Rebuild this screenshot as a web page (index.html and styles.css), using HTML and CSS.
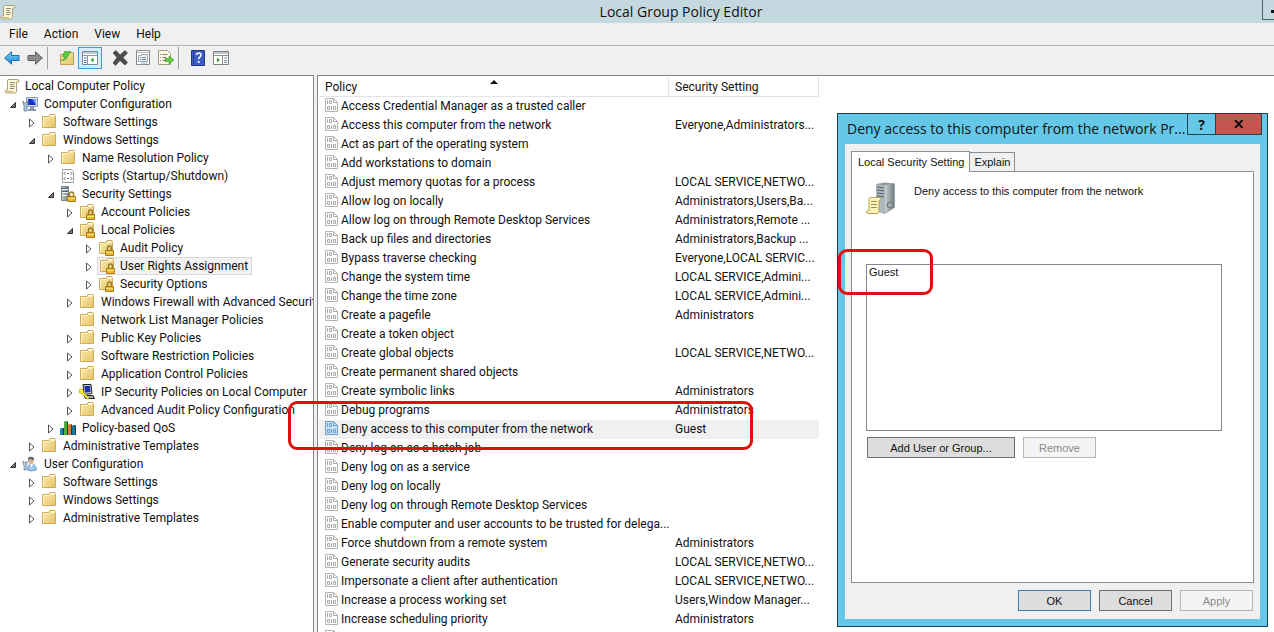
FILE: index.html
```html
<!DOCTYPE html>
<html lang="en">
  <head>
    <meta charset="UTF-8" />
    <meta name="viewport" content="width=device-width, initial-scale=1.0" />
    <title>Local Group Policy Editor</title>
    <link rel="stylesheet" href="styles.css">
  </head>
  <body>
    <svg class="sprites" aria-hidden="true">
      <defs>
        <linearGradient id="gold" x1="0" y1="0" x2="1" y2="1">
          <stop offset="0" stop-color="#fbeab0" />
          <stop offset="1" stop-color="#e6c467" />
        </linearGradient>
        <linearGradient id="steel" x1="0" y1="0" x2="1" y2="0">
          <stop offset="0" stop-color="#c9d0d2" />
          <stop offset="1" stop-color="#6f7a7e" />
        </linearGradient>
        <linearGradient id="sky" x1="0" y1="0" x2="0" y2="1">
          <stop offset="0" stop-color="#7fd0fa" />
          <stop offset="1" stop-color="#1587d8" />
        </linearGradient>
      </defs>
      <symbol id="closed" viewBox="0 0 8 10">
        <path d="M1.5 1v8L6 5z" fill="#fff" stroke="#555" />
      </symbol>
      <symbol id="open" viewBox="0 0 8 10">
        <path d="M6.5 2.5v5h-5z" fill="#777" stroke="#333" />
      </symbol>
      <symbol id="scroll" viewBox="0 0 16 16">
        <path d="M4.5 1.5h9q1.500 0 1.500 1.500t-1.500 1.500h-1v9q-.5 1.500-2 1.500h-8q-1.500 0-1.500-1.500t1.500-1.500h1v-9q0-1.500 1-1.500z" fill="#fdf8d8" stroke="#a9a27c" />
        <path d="M6 4.500h5M6 6.500h4M6 8.500h5M6 10.500h4" stroke="#8d8d80" />
        <path d="M2 13.500h7M12.500 3h2" stroke="#c5b878" />
      </symbol>
      <symbol id="folder" viewBox="0 0 16 16">
        <path d="M1.500 2.500h6.500l1-2h5v2h.5v11h-13z" fill="url(#gold)" stroke="#cfab58" />
        <path d="M9.500 1.500h4" stroke="#fff" />
        <path d="M2.500 13V3.500h6l1-1h4" fill="none" stroke="#fff3c8" />
      </symbol>
      <symbol id="lock" viewBox="0 0 16 16">
        <path d="M9.500 10V8q0-2 2-2t2 2v2" fill="none" stroke="#9c7a28" stroke-width="1.500" />
        <path d="M7.500 10.500h8v5h-8z" fill="#e9b634" stroke="#a87b18" />
        <path d="M8 12.500h7" stroke="#fbe07c" />
      </symbol>
      <symbol id="folder-lock" viewBox="0 0 16 16">
        <use href="#folder" width="16" height="16" />
        <use href="#lock" width="16" height="16" />
      </symbol>
      <symbol id="server-lock" viewBox="0 0 16 16">
        <path d="M1.500.5h7v14h-7z" fill="url(#steel)" stroke="#78868c" />
        <path d="M2 3.500h6M2 6.500h6M2 9.500h5" stroke="#eef3f5" />
        <path d="M2 2.500h6M2 5.500h6" stroke="#52646e" />
        <use href="#lock" width="16" height="16" />
      </symbol>
      <symbol id="computer" viewBox="0 0 16 16">
        <path d="M4.500 1.500h11v9h-11z" fill="#dce4f2" stroke="#8797b8" />
        <path d="M6 3h8v6H6z" fill="#1630c8" />
        <path d="M10 3h4v6z" fill="#6f9cf4" />
        <path d="M8 11h4v2h2v2H6v-2h2z" fill="#8c98ad" />
        <path d="M1 5v3l1 1v6h3V9l1-1V5L4.500 7h-2z" fill="#a9c3d6" stroke="#56758b" stroke-width=".7" />
      </symbol>
      <symbol id="user" viewBox="0 0 16 16">
        <path d="M5 14q0-6 4.500-6t5 6q-5 2-9.500 0z" fill="#9ec4ec" stroke="#5a86b8" stroke-width=".7" />
        <path d="M8 8l1.500 4L11 8z" fill="#fff" />
        <ellipse cx="9" cy="4.500" rx="2.800" ry="3.500" fill="#d9b48d" />
        <path d="M6 4.500Q5.500.5 9 .8t3 3.500Q9 3.500 8 2.800 7.500 4 6 4.500z" fill="#5d6670" />
        <path d="M1 5v3l1 1v5h2V9l1-1V5L4 6.500H2z" fill="#bacddc" stroke="#64808f" stroke-width=".7" />
      </symbol>
      <symbol id="script" viewBox="0 0 16 16">
        <path d="M2.500 1.500h9l2 2v11h-11z" fill="#fff" stroke="#a0a0a0" />
        <path d="M5.500 4L4 5.500 5.500 7M10.500 4L12 5.500 10.500 7M5.500 9L4 10.500 5.500 12M10.500 9l1.500 1.500L10.500 12M7 5.500h2M7 10.500h2" fill="none" stroke="#666" />
      </symbol>
      <symbol id="ipsec" viewBox="0 0 16 16">
        <path d="M4 .5h8l1 9-8 1z" fill="#c8ccd8" stroke="#222" />
        <path d="M5.500 2h5.500l.5 6-5.500.5z" fill="#1b2fa8" />
        <path d="M5 11.500h9l1.500 3h-9z" fill="#a8acb8" stroke="#222" />
        <path d="M0 7q0-2.500 2.500-2t1.800 3l6 6-1.500 1.200L7 14 6 12.500 2.500 9.500Q0 9.500 0 7z" fill="#fff02c" stroke="#9b8d00" stroke-width=".6" />
      </symbol>
      <symbol id="bars" viewBox="0 0 16 16">
        <path d="M0 9l1-1h3v7H0z" fill="#1c7fae" />
        <path d="M4 2l1-1h3v14H4z" fill="#4cae3c" />
        <path d="M8 5l1-1h3v11H8z" fill="#e8724f" />
        <path d="M12 6l1-1h3v10h-4z" fill="#157895" />
        <path d="M3.500 8v7M7.500 2v13M11.500 5v10M15.500 6v9" stroke="#173d49" />
      </symbol>
      <symbol id="policy" viewBox="0 0 13 14">
        <path d="M.5.5h8l4 4v9H.5z" class="policy-page" />
        <path d="M8.500.5v4h4" class="policy-line" />
        <path d="M2.500 2v4M4.500 2.500h2v3h-2zM2.500 8.500h2v3h-2zM6.500 8v4M8.500 8.500h2v3h-2z" class="policy-line" />
      </symbol>
      <symbol id="back" viewBox="0 0 16 16">
        <path d="M.6 8L7.500 1.800V5.500h7.500v5H7.500v3.700z" fill="url(#sky)" stroke="#1b6fae" />
      </symbol>
      <symbol id="forward" viewBox="0 0 16 16">
        <path d="M15.400 8L8.500 1.800V5.500H1v5h7.500v3.700z" fill="#8b8b8b" stroke="#5e5e5e" />
      </symbol>
      <symbol id="up" viewBox="0 0 16 16">
        <path d="M1.500 4.500h7l1-2h5v12h-13z" fill="url(#gold)" stroke="#c79d4b" />
        <path d="M2 10.500q4-1 4-4H3.500L5.500 1.500h6L9.500 5.500H9q-1 5-7 5z" fill="#5ccb45" stroke="#2f9a24" stroke-width=".6" />
      </symbol>
      <symbol id="tree-pane" viewBox="0 0 16 16">
        <path d="M.5 1.500h15v13H.5z" fill="#fff" stroke="#7b8a9b" />
        <path d="M1 3h14M1 5.500h14" stroke="#8797a7" />
        <path d="M5.500 6v8" stroke="#8797a7" />
        <path d="M2 8h2.500M2 10.500h2.500M2 12.500h2.500" stroke="#4a75b5" />
        <path d="M11.500 7.500v5l-3-2.500z" fill="#35a62d" />
      </symbol>
      <symbol id="action-pane" viewBox="0 0 16 16">
        <path d="M.5 1.500h15v13H.5z" fill="#fff" stroke="#7b8288" />
        <path d="M1 3h14M1 5.500h14M9.500 6v8" stroke="#858d94" />
        <path d="M11 8h3M11 10.500h3M11 12.500h3" stroke="#7a8794" />
        <path d="M4 7.500v5L7 10z" fill="#35a62d" />
      </symbol>
      <symbol id="delete" viewBox="0 0 16 16">
        <path d="M1 3l3-2.500L8 5l5-4.500L15.500 3 11 7.500l4.500 5-2.500 2.500-5-4.500-4.500 5L1 13l4-5.500z" fill="#4d4d4d" stroke="#333" stroke-width=".6" />
      </symbol>
      <symbol id="properties" viewBox="0 0 16 16">
        <path d="M1.500.5h13v14h-13z" fill="#fff" stroke="#8a8a8a" />
        <path d="M2 2.500h12" stroke="#b5b5b5" />
        <path d="M3.500 5.500h3v-1h6v7h-9z" fill="#f4f6f8" stroke="#9aa4ae" />
        <path d="M5 7.500h1M7 7.500h4M5 9.500h1M7 9.500h4" stroke="#5f83a8" />
        <path d="M6 13h6" stroke="#8fb6d8" />
      </symbol>
      <symbol id="export" viewBox="0 0 16 16">
        <path d="M.5.5h9l3 3v11H.5z" fill="#fff9e4" stroke="#a29c85" />
        <path d="M2 4.500h1M4.500 4.500h5M2 7.500h1M4.500 7.500h4M2 10.500h1M4.500 10.500h4" stroke="#7d7d86" />
        <path d="M7 8.500h4V6l5 4-5 4v-2.500H7z" fill="#67cb3f" stroke="#38962a" stroke-width=".6" />
      </symbol>
      <symbol id="help" viewBox="0 0 14 16">
        <path d="M.5.5h13v15H.5z" fill="#3c5cc6" stroke="#22357f" />
        <path d="M2.500 1v14" stroke="#243c94" />
        <path d="M5.500 5q0-2 2.200-2t2.200 2c0 2-2.200 2-2.200 4.200" fill="none" stroke="#fff" stroke-width="1.600" />
        <path d="M6.800 11h1.800v1.800H6.800z" fill="#fff" />
      </symbol>
      <symbol id="server-big" viewBox="0 0 30 34">
        <path d="M10 2l9-1.500 9.500 1v24L19 32l-9-3z" fill="#8c9699" />
        <path d="M10 2l9 1v29l-9-3z" fill="#aeb7ba" />
        <path d="M19 3l9.500-1.500v24L19 32z" fill="url(#steel)" />
        <path d="M11 5l7 1M11 8l7 1M11 11l7 1M11 14l7 1" stroke="#56636a" stroke-width="1.200" />
        <circle cx="24" cy="23" r="3" fill="#9da7aa" stroke="#687478" />
        <path d="M4.500 15.500h9q1.500 0 1 2l-1.500 1v10q0 3-2 3H2q-1.500 0-1.500-1.500T2 28.500h1v-11q0-2 1.500-2z" fill="#fff4b8" stroke="#b8a25b" />
        <path d="M5 19.500h6M5 22.500h6M5 25.500h6" stroke="#a08f59" />
      </symbol>
    </svg>

    <div class="window">
      <header class="titlebar">
        <svg class="icon"><use href="#scroll" /></svg>
        <h1>Local Group Policy Editor</h1>
        <button class="minimize" aria-label="Minimize"></button>
      </header>

      <nav class="menubar">
        <a href="#">File</a>
        <a href="#">Action</a>
        <a href="#">View</a>
        <a href="#">Help</a>
      </nav>

      <div class="toolbar">
        <button aria-label="Back"><svg class="icon"><use href="#back" /></svg></button>
        <button aria-label="Forward"><svg class="icon"><use href="#forward" /></svg></button>
        <span class="divider"></span>
        <button aria-label="Up one level"><svg class="icon"><use href="#up" /></svg></button>
        <button class="pressed" aria-label="Show console tree"><svg class="icon"><use href="#tree-pane" /></svg></button>
        <button class="spaced" aria-label="Delete"><svg class="icon"><use href="#delete" /></svg></button>
        <button aria-label="Properties"><svg class="icon"><use href="#properties" /></svg></button>
        <button aria-label="Export list"><svg class="icon"><use href="#export" /></svg></button>
        <span class="divider"></span>
        <button aria-label="Help"><svg class="icon"><use href="#help" /></svg></button>
        <button aria-label="Show action pane"><svg class="icon"><use href="#action-pane" /></svg></button>
      </div>

      <main class="panes">
        <section class="tree">
          <div class="node"><svg class="icon"><use href="#scroll" /></svg><span>Local Computer Policy</span></div>
          <ul class="top">
            <li>
              <div class="node"><svg class="arrow"><use href="#open" /></svg><svg class="icon"><use href="#computer" /></svg><span>Computer Configuration</span></div>
              <ul>
                <li><div class="node"><svg class="arrow"><use href="#closed" /></svg><svg class="icon"><use href="#folder" /></svg><span>Software Settings</span></div></li>
                <li>
                  <div class="node"><svg class="arrow"><use href="#open" /></svg><svg class="icon"><use href="#folder" /></svg><span>Windows Settings</span></div>
                  <ul>
                    <li><div class="node"><svg class="arrow"><use href="#closed" /></svg><svg class="icon"><use href="#folder" /></svg><span>Name Resolution Policy</span></div></li>
                    <li><div class="node leaf"><svg class="icon"><use href="#script" /></svg><span>Scripts (Startup/Shutdown)</span></div></li>
                    <li>
                      <div class="node"><svg class="arrow"><use href="#open" /></svg><svg class="icon"><use href="#server-lock" /></svg><span>Security Settings</span></div>
                      <ul>
                        <li><div class="node"><svg class="arrow"><use href="#closed" /></svg><svg class="icon"><use href="#folder-lock" /></svg><span>Account Policies</span></div></li>
                        <li>
                          <div class="node"><svg class="arrow"><use href="#open" /></svg><svg class="icon"><use href="#folder-lock" /></svg><span>Local Policies</span></div>
                          <ul>
                            <li><div class="node"><svg class="arrow"><use href="#closed" /></svg><svg class="icon"><use href="#folder-lock" /></svg><span>Audit Policy</span></div></li>
                            <li><div class="node"><svg class="arrow"><use href="#closed" /></svg><div class="current"><svg class="icon"><use href="#folder-lock" /></svg><span>User Rights Assignment</span></div></div></li>
                            <li><div class="node"><svg class="arrow"><use href="#closed" /></svg><svg class="icon"><use href="#folder-lock" /></svg><span>Security Options</span></div></li>
                          </ul>
                        </li>
                        <li><div class="node"><svg class="arrow"><use href="#closed" /></svg><svg class="icon"><use href="#folder" /></svg><span>Windows Firewall with Advanced Securit</span></div></li>
                        <li><div class="node leaf"><svg class="icon"><use href="#folder" /></svg><span>Network List Manager Policies</span></div></li>
                        <li><div class="node"><svg class="arrow"><use href="#closed" /></svg><svg class="icon"><use href="#folder" /></svg><span>Public Key Policies</span></div></li>
                        <li><div class="node"><svg class="arrow"><use href="#closed" /></svg><svg class="icon"><use href="#folder" /></svg><span>Software Restriction Policies</span></div></li>
                        <li><div class="node"><svg class="arrow"><use href="#closed" /></svg><svg class="icon"><use href="#folder" /></svg><span>Application Control Policies</span></div></li>
                        <li><div class="node"><svg class="arrow"><use href="#closed" /></svg><svg class="icon"><use href="#ipsec" /></svg><span>IP Security Policies on Local Computer</span></div></li>
                        <li><div class="node"><svg class="arrow"><use href="#closed" /></svg><svg class="icon"><use href="#folder" /></svg><span>Advanced Audit Policy Configuration</span></div></li>
                      </ul>
                    </li>
                    <li><div class="node"><svg class="arrow"><use href="#closed" /></svg><svg class="icon"><use href="#bars" /></svg><span>Policy-based QoS</span></div></li>
                  </ul>
                </li>
                <li><div class="node"><svg class="arrow"><use href="#closed" /></svg><svg class="icon"><use href="#folder" /></svg><span>Administrative Templates</span></div></li>
              </ul>
            </li>
            <li>
              <div class="node"><svg class="arrow"><use href="#open" /></svg><svg class="icon"><use href="#user" /></svg><span>User Configuration</span></div>
              <ul>
                <li><div class="node"><svg class="arrow"><use href="#closed" /></svg><svg class="icon"><use href="#folder" /></svg><span>Software Settings</span></div></li>
                <li><div class="node"><svg class="arrow"><use href="#closed" /></svg><svg class="icon"><use href="#folder" /></svg><span>Windows Settings</span></div></li>
                <li><div class="node"><svg class="arrow"><use href="#closed" /></svg><svg class="icon"><use href="#folder" /></svg><span>Administrative Templates</span></div></li>
              </ul>
            </li>
          </ul>
        </section>

        <section class="list">
          <table>
            <thead>
              <tr><th class="sorted">Policy</th><th>Security Setting</th></tr>
            </thead>
            <tbody>
              <tr><td><svg class="doc"><use href="#policy" /></svg>Access Credential Manager as a trusted caller</td><td></td></tr>
              <tr><td><svg class="doc"><use href="#policy" /></svg>Access this computer from the network</td><td>Everyone,Administrators...</td></tr>
              <tr><td><svg class="doc"><use href="#policy" /></svg>Act as part of the operating system</td><td></td></tr>
              <tr><td><svg class="doc"><use href="#policy" /></svg>Add workstations to domain</td><td></td></tr>
              <tr><td><svg class="doc"><use href="#policy" /></svg>Adjust memory quotas for a process</td><td>LOCAL SERVICE,NETWO...</td></tr>
              <tr><td><svg class="doc"><use href="#policy" /></svg>Allow log on locally</td><td>Administrators,Users,Ba...</td></tr>
              <tr><td><svg class="doc"><use href="#policy" /></svg>Allow log on through Remote Desktop Services</td><td>Administrators,Remote ...</td></tr>
              <tr><td><svg class="doc"><use href="#policy" /></svg>Back up files and directories</td><td>Administrators,Backup ...</td></tr>
              <tr><td><svg class="doc"><use href="#policy" /></svg>Bypass traverse checking</td><td>Everyone,LOCAL SERVIC...</td></tr>
              <tr><td><svg class="doc"><use href="#policy" /></svg>Change the system time</td><td>LOCAL SERVICE,Admini...</td></tr>
              <tr><td><svg class="doc"><use href="#policy" /></svg>Change the time zone</td><td>LOCAL SERVICE,Admini...</td></tr>
              <tr><td><svg class="doc"><use href="#policy" /></svg>Create a pagefile</td><td>Administrators</td></tr>
              <tr><td><svg class="doc"><use href="#policy" /></svg>Create a token object</td><td></td></tr>
              <tr><td><svg class="doc"><use href="#policy" /></svg>Create global objects</td><td>LOCAL SERVICE,NETWO...</td></tr>
              <tr><td><svg class="doc"><use href="#policy" /></svg>Create permanent shared objects</td><td></td></tr>
              <tr><td><svg class="doc"><use href="#policy" /></svg>Create symbolic links</td><td>Administrators</td></tr>
              <tr><td><svg class="doc"><use href="#policy" /></svg>Debug programs</td><td>Administrators</td></tr>
              <tr class="selected"><td><svg class="doc"><use href="#policy" /></svg>Deny access to this computer from the network</td><td>Guest</td></tr>
              <tr><td><svg class="doc"><use href="#policy" /></svg>Deny log on as a batch job</td><td></td></tr>
              <tr><td><svg class="doc"><use href="#policy" /></svg>Deny log on as a service</td><td></td></tr>
              <tr><td><svg class="doc"><use href="#policy" /></svg>Deny log on locally</td><td></td></tr>
              <tr><td><svg class="doc"><use href="#policy" /></svg>Deny log on through Remote Desktop Services</td><td></td></tr>
              <tr><td><svg class="doc"><use href="#policy" /></svg>Enable computer and user accounts to be trusted for delega...</td><td></td></tr>
              <tr><td><svg class="doc"><use href="#policy" /></svg>Force shutdown from a remote system</td><td>Administrators</td></tr>
              <tr><td><svg class="doc"><use href="#policy" /></svg>Generate security audits</td><td>LOCAL SERVICE,NETWO...</td></tr>
              <tr><td><svg class="doc"><use href="#policy" /></svg>Impersonate a client after authentication</td><td>LOCAL SERVICE,NETWO...</td></tr>
              <tr><td><svg class="doc"><use href="#policy" /></svg>Increase a process working set</td><td>Users,Window Manager...</td></tr>
              <tr><td><svg class="doc"><use href="#policy" /></svg>Increase scheduling priority</td><td>Administrators</td></tr>
              <tr><td><svg class="doc"><use href="#policy" /></svg></td><td></td></tr>
            </tbody>
          </table>
        </section>
      </main>
      <div class="marker marker-policy"></div>
    </div>

    <div class="dialog" role="dialog" aria-labelledby="dialog-title">
      <div class="dialog-title">
        <h2 id="dialog-title">Deny access to this computer from the network Pr...</h2>
        <button class="help-button" aria-label="Help">?</button>
        <button class="close-button" aria-label="Close">
          <svg viewBox="0 0 10 8"><path d="M1 0l7.500 8M8.500 0L1 8" stroke="#111" stroke-width="2" /></svg>
        </button>
      </div>
      <div class="dialog-body">
        <div class="tabs" role="tablist">
          <button class="tab active" role="tab" aria-selected="true">Local Security Setting</button>
          <button class="tab" role="tab" aria-selected="false">Explain</button>
        </div>
        <div class="tab-panel" role="tabpanel">
          <div class="summary">
            <svg class="server"><use href="#server-big" /></svg>
            <label for="accounts">Deny access to this computer from the network</label>
          </div>
          <select id="accounts" size="8">
            <option>Guest</option>
          </select>
          <div class="list-buttons">
            <button class="push add">Add User or Group...</button>
            <button class="push" disabled>Remove</button>
          </div>
        </div>
        <div class="dialog-buttons">
          <button class="push default">OK</button>
          <button class="push">Cancel</button>
          <button class="push" disabled>Apply</button>
        </div>
      </div>
      <div class="marker marker-guest"></div>
    </div>
  </body>
</html>
```
FILE: styles.css
```css
* {
  box-sizing: border-box;
}

body {
  margin: 0;
  height: 100vh;
  overflow: hidden;
  position: relative;
  font-family: "Segoe UI", Roboto, sans-serif;
  font-size: 12px;
  color: #111;
  background-color: #fff;
}

button {
  font: inherit;
  color: inherit;
  padding: 0;
  margin: 0;
  border: none;
  background: none;
}

h1,
h2 {
  margin: 0;
  font-family: "Segoe UI", "Open Sans", sans-serif;
  font-size: 14px;
  font-weight: normal;
}

.sprites {
  position: absolute;
  width: 0;
  height: 0;
}

.icon {
  width: 16px;
  height: 16px;
  flex: none;
}

.window {
  height: 100%;
  display: flex;
  flex-direction: column;
  background-color: #f0f0f0;
}

/* title bar, menu and toolbar */
.titlebar {
  display: flex;
  align-items: center;
  height: 23px;
  flex: none;
  background-color: #c3d8df;
}

.titlebar h1 {
  flex: 1;
  padding-left: 84px;
  line-height: 22px;
  text-align: center;
}

.minimize {
  align-self: flex-start;
  width: 12px;
  height: 20px;
  border: 1px solid #48636c;
  border-width: 0 0 1px 1px;
  background: linear-gradient(#111, #111) 8px 10px / 4px 3px no-repeat;
}

.menubar {
  display: flex;
  gap: 16px;
  height: 23px;
  flex: none;
  padding-left: 9px;
  border-bottom: 1px solid #b4b4b4;
}

.menubar a {
  color: #111;
  line-height: 22px;
  text-decoration: none;
}

.toolbar {
  display: flex;
  align-items: center;
  height: 29px;
  flex: none;
  padding-bottom: 5px;
}

.toolbar button {
  width: 23px;
  height: 22px;
  display: flex;
  align-items: center;
  justify-content: center;
}

.toolbar .pressed {
  width: 24px;
  border: 1px solid #3c9be0;
  background-color: #d8ebfa;
}

.toolbar .spaced {
  margin-left: 6px;
}

.divider {
  width: 1px;
  height: 22px;
  margin: 0 7px 0 1px;
  background-color: #a0a0a0;
}

/* panes */
.panes {
  flex: 1;
  min-height: 0;
  display: flex;
  gap: 3px;
}

.tree {
  width: 314px;
  flex: none;
  overflow: hidden;
  padding: 1px 0 0 4px;
  border: 1px solid #828790;
  border-left: none;
  border-bottom: none;
  background-color: #fff;
}

.tree ul {
  margin: 0;
  padding-left: 19px;
  list-style: none;
}

.tree .top {
  padding-left: 0;
}

.node,
.current {
  display: flex;
  align-items: center;
  gap: 5px;
  height: 18px;
  line-height: 18px;
  white-space: nowrap;
}

.arrow {
  width: 8px;
  height: 10px;
  flex: none;
  margin: 2px 0 0 5px;
}

.leaf {
  padding-left: 18px;
}

.node .arrow + .icon {
  margin-right: 1px;
}

.leaf .icon {
  margin-right: 1px;
}

.current {
  margin-left: -1px;
  padding: 0 3px 0 1px;
  border: 1px solid #d9d9d9;
  background-color: #f2f2f2;
}

.list {
  flex: 1;
  overflow: hidden;
  padding: 1px 0 0 1px;
  border: 1px solid #828790;
  border-right: none;
  border-bottom: none;
  background-color: #fff;
}

table {
  width: 500px;
  table-layout: fixed;
  border-collapse: separate;
  border-spacing: 0;
}

th {
  position: relative;
  height: 20px;
  padding: 1px 6px 0;
  border-right: 1px solid #dfe5e8;
  border-bottom: 1px solid #dfe5e8;
  font-weight: normal;
  text-align: left;
  line-height: 18px;
}

th:first-child {
  width: 350px;
}

.sorted::after {
  content: "";
  position: absolute;
  top: 3px;
  left: 50%;
  margin-left: -4px;
  border: 4px solid transparent;
  border-top: none;
  border-bottom-color: #111;
}

td {
  height: 19px;
  padding: 0 0 0 6px;
  line-height: 19px;
  white-space: nowrap;
  overflow: hidden;
}

.doc {
  width: 13px;
  height: 14px;
  margin-right: 3px;
  vertical-align: -2px;
}

.policy-page {
  fill: var(--page, #fff);
  stroke: var(--ink, #b4b4b4);
}

.policy-line {
  fill: none;
  stroke: var(--ink, #aaa);
}

.selected {
  --page: #c4e0f8;
  --ink: #6d9fcb;
}

.selected td {
  background-color: #f0f0f0;
}

/* properties dialog */
.dialog {
  position: absolute;
  top: 113px;
  left: 837px;
  width: 431px;
  display: flex;
  flex-direction: column;
  padding: 0 7px 7px;
  border: 1px solid #1d3f4d;
  background-color: #65c8e8;
  font-family: "Liberation Sans", Arial, sans-serif;
  font-size: 11px;
}

.dialog-title {
  display: flex;
  align-items: flex-start;
  height: 30px;
  margin-right: -2px;
}

.dialog-title h2 {
  flex: 1;
  padding-left: 2px;
  line-height: 30px;
  white-space: nowrap;
}

.help-button,
.close-button {
  height: 21px;
  border: 1px solid #23434f;
  border-top: none;
}

.help-button {
  width: 29px;
  font-family: "Open Sans", sans-serif;
  font-size: 14px;
  font-weight: bold;
}

.close-button {
  width: 46px;
  border-left: none;
  background-color: #c5554f;
}

.close-button svg {
  width: 10px;
  height: 8px;
}

.dialog-body {
  padding: 7px 6px 8px;
  background-color: #f0f0f0;
}

.tabs {
  display: flex;
  align-items: flex-end;
}

.tab {
  height: 19px;
  padding: 0 4px;
  border: 1px solid #8c8e94;
  border-left: none;
  border-bottom: none;
}

.tab.active {
  height: 21px;
  margin-bottom: -1px;
  padding: 0 5px 1px 6px;
  border-left: 1px solid #8c8e94;
  background-color: #fff;
  z-index: 1;
}

.tab-panel {
  height: 412px;
  padding: 10px 14px;
  border: 1px solid #8c8e94;
  background-color: #fff;
}

.summary {
  display: flex;
  gap: 18px;
  height: 82px;
}

.server {
  width: 30px;
  height: 34px;
}

.summary label {
  line-height: 18px;
}

select {
  display: block;
  width: 356px;
  height: 167px;
  padding: 1px 0;
  border: 1px solid #828790;
  border-radius: 0;
  background-color: #fff;
  font: inherit;
  color: inherit;
  overflow: hidden;
}

option {
  padding: 0 2px;
  min-height: 14px;
  line-height: 14px;
}

.list-buttons {
  display: flex;
  gap: 8px;
  padding: 6px 1px;
}

.push {
  width: 73px;
  height: 21px;
  border: 1px solid #707070;
  background-color: #ddd;
}

.push.add {
  width: 148px;
}

.push.default {
  border-color: #3c7fb1;
}

.push:disabled {
  color: #8b8b8b;
  border-color: #b5b5b5;
  background-color: #f4f4f4;
}

.dialog-buttons {
  display: flex;
  justify-content: flex-end;
  gap: 8px;
  padding: 7px 1px 0;
}

/* red outlines drawn over the windows */
.marker {
  position: absolute;
  border: 3px solid #e01010;
  border-radius: 9px;
  pointer-events: none;
}

.marker-policy {
  top: 401px;
  left: 288px;
  width: 465px;
  height: 49px;
}

.marker-guest {
  top: 135px;
  left: 0;
  width: 95px;
  height: 46px;
}
```
